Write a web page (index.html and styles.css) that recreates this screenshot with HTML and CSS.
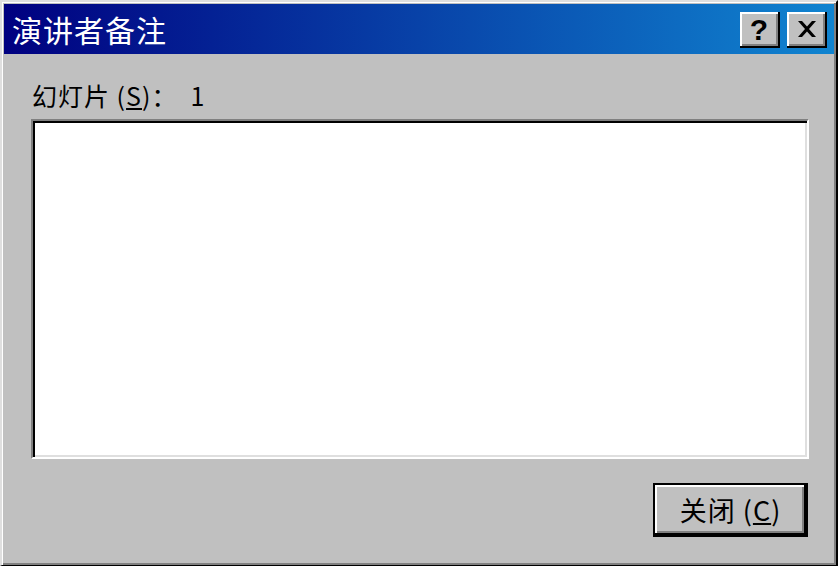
FILE: index.html
```html
<!DOCTYPE html>
<html lang="zh-CN">

<head>
    <meta charset="UTF-8">
    <title>演讲者备注</title>
    <link rel="stylesheet" href="styles.css">
</head>

<body>
    <div class="window">
        <!-- 标题栏 -->
        <div class="title-bar">
            <span class="title-text">演讲者备注</span>
            <div class="title-buttons">
                <button class="title-btn help-btn">?</button>
                <button class="title-btn close-btn">
                    <svg width="18" height="16" viewBox="0 0 18 16">
                        <path d="M0 0h4l5 5.5 5-5.5h4l-7 8 7 8h-4l-5-5.5-5 5.5h-4l7-8z" fill="#000"/>
                    </svg>
                </button>
            </div>
        </div>

        <!-- 内容 -->
        <div class="content">
            <div class="slide-label">幻灯片 (<u>S</u>)：&nbsp; 1</div>
            <div class="notes-box"></div>
            <div class="footer">
                <button class="btn default-btn">关闭 (<u>C</u>)</button>
            </div>
        </div>
    </div>
</body>

</html>
```

FILE: styles.css
```css
body {
    margin: 0;
    background-color: #c0c0c0;
    font-family: "Noto Sans CJK SC", "Liberation Sans", sans-serif;
}

.window {
    width: 838px;
    height: 566px;
    box-sizing: border-box;
    background-color: #c0c0c0;
    border-top: 2px solid #dfdfdf;
    border-left: 2px solid #dfdfdf;
    border-right: 2px solid #000;
    border-bottom: 1px solid #000;
    box-shadow: inset 1px 1px 0 #fff, inset -2px -2px 0 #808080;
    padding: 2px;
    display: flex;
    flex-direction: column;
}

/* 标题栏 */
.title-bar {
    height: 50px;
    flex-shrink: 0;
    background: linear-gradient(to right, #000080, #1084d0);
    display: flex;
    align-items: center;
    justify-content: space-between;
    padding: 0 7px 0 8px;
}

.title-text {
    color: #fff;
    font-size: 30px;
    line-height: 34px;
    letter-spacing: 1px;
}

.title-buttons {
    display: flex;
    gap: 7px;
    margin-top: 1px;
}

.title-btn {
    width: 40px;
    height: 36px;
    padding: 0;
    border: none;
    background-color: #c0c0c0;
    box-shadow: inset -2px -2px 0 #000, inset 2px 2px 0 #fff, inset -4px -4px 0 #808080;
    display: flex;
    align-items: center;
    justify-content: center;
}

.help-btn {
    font-family: "Liberation Sans", sans-serif;
    font-weight: bold;
    font-size: 30px;
    line-height: 30px;
    color: #000;
    padding-right: 2px;
}

.close-btn svg {
    margin-bottom: 2px;
}

/* 内容 */
.content {
    flex: 1;
    display: flex;
    flex-direction: column;
    padding: 0 25px 0 27px;
}

.slide-label {
    margin-top: 26px;
    padding-left: 1px;
    font-size: 25px;
    line-height: 30px;
    letter-spacing: 1px;
    color: #000;
}

.slide-label u,
.default-btn u {
    text-decoration-thickness: 2px;
    text-underline-offset: 2px;
}

.notes-box {
    margin-top: 9px;
    height: 340px;
    box-sizing: border-box;
    background-color: #fff;
    border-top: 2px solid #808080;
    border-left: 2px solid #808080;
    border-right: 2px solid #fff;
    border-bottom: 2px solid #fff;
    box-shadow: inset 2px 2px 0 #000, inset -2px -2px 0 #dfdfdf;
}

.footer {
    display: flex;
    justify-content: flex-end;
    margin-top: 24px;
    padding-right: 1px;
}

.btn {
    width: 155px;
    height: 54px;
    box-sizing: border-box;
    background-color: #c0c0c0;
    font-family: "Noto Sans CJK SC", "Liberation Sans", sans-serif;
    font-size: 27px;
    letter-spacing: 1px;
    color: #000;
    padding: 0 0 2px;
}

.default-btn {
    border: 2px solid #000;
    box-shadow: inset -2px -2px 0 #000, inset 2px 2px 0 #fff, inset -4px -4px 0 #808080;
}
```
